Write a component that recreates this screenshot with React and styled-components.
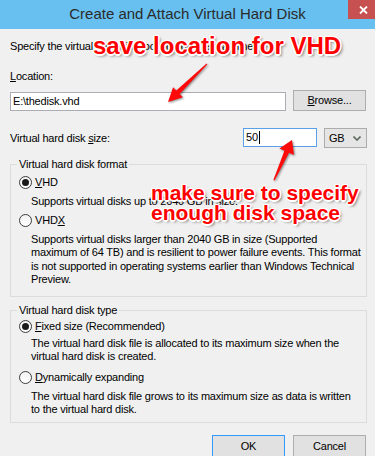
import React from 'react'
import styled, { createGlobalStyle } from 'styled-components'

const GlobalStyle = createGlobalStyle`
  html, body {
    margin: 0;
    padding: 0;
    background: #f0f0f0;
  }
  body {
    font-family: "Liberation Sans", Arial, sans-serif;
  }
`

const Window = styled.div`
  position: relative;
  width: 375px;
  height: 456px;
  overflow: hidden;
  background: #f0f0f0;
  color: #000;
  font-size: 11px;
  line-height: 13px;
  letter-spacing: -0.2px;
`

const TitleBar = styled.div`
  height: 29px;
  background: #67c0f0;
  display: grid;
  grid-template-columns: 1fr auto 1fr;
`

const Title = styled.div`
  grid-column: 2;
  align-self: center;
  padding-bottom: 2px;
  font-size: 15px;
  letter-spacing: 0;
  color: #2b2b2b;
  white-space: nowrap;
`

const CloseButton = styled.div`
  grid-column: 3;
  justify-self: end;
  width: 27px;
  height: 19px;
  background: #c75050;
  display: flex;
  align-items: center;
  justify-content: center;
  padding-left: 3px;
  box-sizing: border-box;
`

const Body = styled.div`
  padding: 11px 8px 0 10px;
  display: flex;
  flex-direction: column;
`

const Text = styled.div`
  margin-top: ${p => p.$mt || 0}px;
  white-space: nowrap;
`

const Key = styled.span`
  text-decoration: underline;
  text-underline-offset: 1px;
`

const Row = styled.div`
  display: flex;
  align-items: ${p => p.$align || 'center'};
  gap: 7px;
  margin-top: ${p => p.$mt || 0}px;
`

const TextBox = styled.div`
  box-sizing: border-box;
  width: ${p => p.$w}px;
  height: 19px;
  padding-left: 2px;
  background: #fff;
  border: 1px solid ${p => (p.$focused ? '#5aa0e6' : '#abadb3')};
  display: flex;
  align-items: center;
`

const Caret = styled.span`
  display: inline-block;
  width: 1px;
  height: 13px;
  margin-left: 1px;
  background: #000;
`

const Button = styled.div`
  box-sizing: border-box;
  width: 73px;
  height: ${p => p.$h || 21}px;
  background: #e1e1e1;
  border: 1px solid ${p => (p.$default ? '#3399ff' : '#adadad')};
  display: flex;
  align-items: center;
  justify-content: center;
`

const SizeLabel = styled.div`
  flex: 1;
  align-self: center;
`

const Combo = styled.div`
  box-sizing: border-box;
  width: 43px;
  height: 20px;
  background: #e5e5e5;
  border: 1px solid #acacac;
  display: flex;
  align-items: center;
  justify-content: space-between;
  padding: 0 5px 0 4px;
`

const Group = styled.fieldset`
  margin: ${p => p.$mt || 0}px 0 0 0;
  padding: 0 8px ${p => p.$pb || 0}px 8px;
  min-width: 0;
  border: 1px solid #dcdcdc;
`

const Legend = styled.legend`
  padding: 0 2px;
  margin-left: -2px;
  line-height: 13px;
`

const RadioRow = styled.div`
  display: flex;
  align-items: center;
  gap: 3px;
  height: 13px;
  margin-top: ${p => p.$mt || 0}px;
`

const RadioDot = styled.span`
  box-sizing: border-box;
  width: 13px;
  height: 13px;
  border-radius: 50%;
  border: 1px solid #3c3c3c;
  background: linear-gradient(#f2f2f2, #ffffff);
  display: flex;
  align-items: center;
  justify-content: center;
  &::after {
    content: '';
    display: ${p => (p.$checked ? 'block' : 'none')};
    width: 7px;
    height: 7px;
    border-radius: 50%;
    background: #1a1a1a;
  }
`

const Desc = styled.div`
  margin: ${p => p.$mt || 0}px 0 0 12px;
  line-height: 13.5px;
  white-space: nowrap;
`

const Buttons = styled.div`
  display: flex;
  justify-content: flex-end;
  gap: 8px;
  margin: 12px 1px 0 0;
`

const Callout = styled.div`
  position: absolute;
  left: ${p => p.$x}px;
  top: ${p => p.$y}px;
  font-family: "Liberation Sans", Arial, sans-serif;
  font-weight: bold;
  font-size: ${p => p.$size}px;
  line-height: ${p => p.$lh}px;
  letter-spacing: 0;
  color: #ff0000;
  white-space: nowrap;
  text-shadow:
    -1px -1px 0 #fff, 1px -1px 0 #fff, -1px 1px 0 #fff, 1px 1px 0 #fff,
    0 -1.5px 0 #fff, 0 1.5px 0 #fff, -1.5px 0 0 #fff, 1.5px 0 0 #fff,
    2px 2px 3px rgba(0, 0, 0, 0.55);
`

const Arrows = styled.svg`
  position: absolute;
  left: 0;
  top: 0;
  width: 375px;
  height: 456px;
  pointer-events: none;
  filter: drop-shadow(1px 1px 1px rgba(0, 0, 0, 0.45));
`

const Radio = ({ checked, children, mt }) => (
  <RadioRow $mt={mt}>
    <RadioDot $checked={checked} />
    <span>{children}</span>
  </RadioRow>
)

export default function App() {
  return (
    <Window>
      <GlobalStyle />
      <TitleBar>
        <Title>Create and Attach Virtual Hard Disk</Title>
        <CloseButton>
          <svg width="9" height="8" viewBox="0 0 9 8">
            <path d="M1 0.5 L8 7.5 M8 0.5 L1 7.5" stroke="#fff" strokeWidth="1.8" />
          </svg>
        </CloseButton>
      </TitleBar>

      <Body>
        <Text>Specify the virtual hard disk location on the machine.</Text>
        <Text $mt={17}>
          <Key>L</Key>ocation:
        </Text>
        <Row $mt={7} $align="flex-end">
          <TextBox $w={276}>E:\thedisk.vhd</TextBox>
          <Button>
            <span>
              <Key>B</Key>rowse...
            </span>
          </Button>
        </Row>

        <Row $mt={17} $align="flex-start">
          <SizeLabel>
            Virtual hard disk <Key>s</Key>ize:
          </SizeLabel>
          <TextBox $w={74} $focused>
            50
            <Caret />
          </TextBox>
          <Combo>
            <span>GB</span>
            <svg width="8" height="5" viewBox="0 0 8 5">
              <path d="M0.5 0.5 L4 4 L7.5 0.5" fill="none" stroke="#5d6b5d" strokeWidth="1.6" />
            </svg>
          </Combo>
        </Row>

        <Group $mt={10} $pb={9}>
          <Legend>Virtual hard disk format</Legend>
          <Radio checked mt={5}>
            <Key>V</Key>HD
          </Radio>
          <Desc $mt={6}>Supports virtual disks up to 2040 GB in size.</Desc>
          <Radio mt={5}>
            VHD<Key>X</Key>
          </Radio>
          <Desc $mt={6}>
            Supports virtual disks larger than 2040 GB in size (Supported
            <br />
            maximum of 64 TB) and is resilient to power failure events. This format
            <br />
            is not supported in operating systems earlier than Windows Technical
            <br />
            Preview.
          </Desc>
        </Group>

        <Group $mt={7} $pb={5}>
          <Legend>Virtual hard disk type</Legend>
          <Radio checked mt={3}>
            <Key>F</Key>ixed size (Recommended)
          </Radio>
          <Desc $mt={4}>
            The virtual hard disk file is allocated to its maximum size when the
            <br />
            virtual hard disk is created.
          </Desc>
          <Radio mt={7}>
            <Key>D</Key>ynamically expanding
          </Radio>
          <Desc $mt={6}>
            The virtual hard disk file grows to its maximum size as data is written
            <br />
            to the virtual hard disk.
          </Desc>
        </Group>

        <Buttons>
          <Button $default $h={23}>OK</Button>
          <Button $h={23}>Cancel</Button>
        </Buttons>
      </Body>

      <Arrows viewBox="0 0 375 456">
        <polygon
          fill="#ff0a0a"
          points="206.6,63.6 176.3,90.4 173.1,87.2 168,102 182.9,97.2 179.7,94 207.3,64.4"
        />
        <polygon
          fill="#ff0a0a"
          points="273.4,180 284.4,150.8 279.4,148.5 292,140 294,155.1 289,152.8 274.6,180.4"
        />
      </Arrows>

      <Callout $x={93} $y={34} $size={24} $lh={24}>
        save location for VHD
      </Callout>
      <Callout $x={151} $y={183} $size={21} $lh={20}>
        make sure to specify
        <br />
        enough disk space
      </Callout>
    </Window>
  )
}
